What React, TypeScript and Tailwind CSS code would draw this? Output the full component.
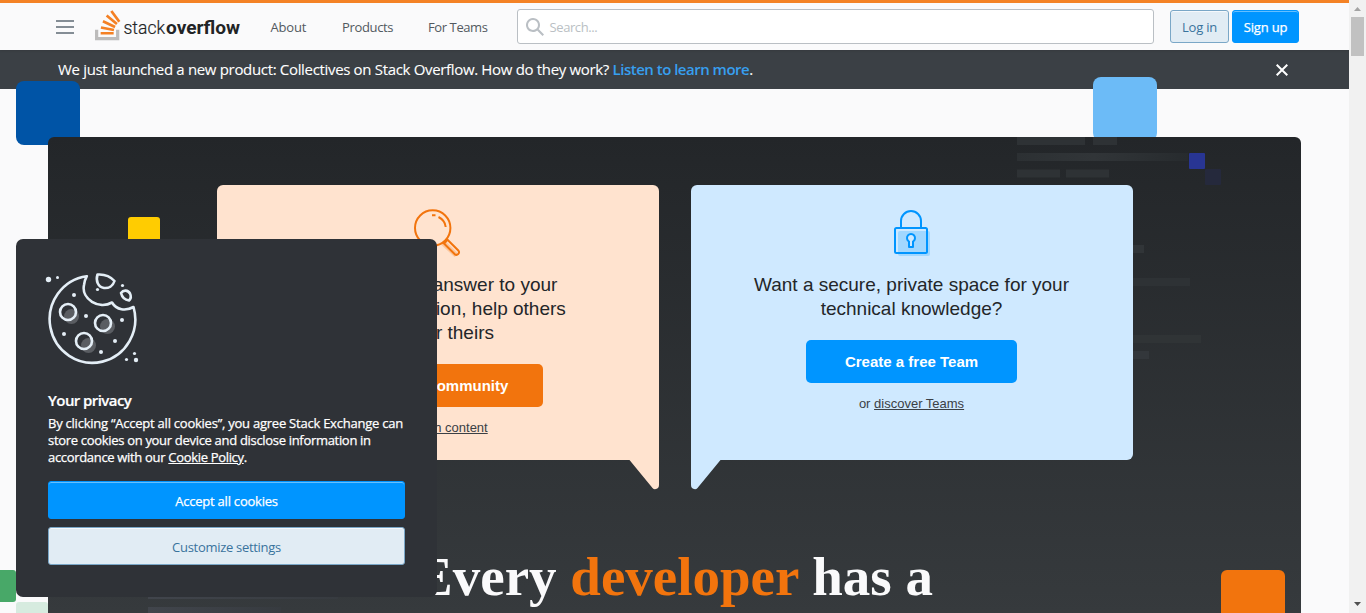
import React from "react";

const UI = "font-['Open_Sans','Noto_Sans',sans-serif]";
const ARIAL = "font-['Liberation_Sans',Arial,sans-serif]";

function Logo() {
  return (
    <svg width="150" height="34" viewBox="0 0 150 34" className="shrink-0" aria-label="Stack Overflow">
      <g transform="translate(0 0.2) scale(0.81)">
        <path d="M26 33v-9h4v13H0V24h4v9h22Z" fill="#bcbbbb" />
        <path
          d="m21.5 0-2.7 2 9.9 13.3 2.7-2L21.5 0ZM26 18.4 13.3 7.8l2.1-2.5 12.7 10.6-2.1 2.5ZM9.1 15.2l15 7 1.4-3-15-7-1.4 3Zm14 10.79.68-2.95-16.1-3.35L7 23l16.1 2.99ZM23 30H7v-3h16v3Z"
          fill="#f48024"
        />
      </g>
      <text x="28.500" y="24.400" fontSize="19" textLength="41.500" lengthAdjust="spacingAndGlyphs" fill="#222426" className="font-['Roboto'] font-light [stroke:#222426] [stroke-width:0.2px]">
        stack
      </text>
      <text x="71" y="24.400" fontSize="19" textLength="74" lengthAdjust="spacingAndGlyphs" fill="#222426" className="font-['Roboto'] font-bold">
        overflow
      </text>
    </svg>
  );
}

function Header() {
  return (
    <header className={`relative z-10 flex h-[50px] shrink-0 items-center border-t-[3px] border-[#f48225] bg-[#fafafb] text-[13px] text-[#525960] shadow-[0_1px_2px_rgba(0,0,0,0.1)] ${UI}`}>
      <button className="ml-14 flex w-[18px] flex-col gap-1" aria-label="Menu">
        <span className="h-0.5 bg-[#848d95]" />
        <span className="h-0.5 bg-[#848d95]" />
        <span className="h-0.5 bg-[#848d95]" />
      </button>
      <a className="ml-[21px]"><Logo /></a>
      <nav className="flex w-[272px] pt-0.5 pl-[25.500px]">
        <a className="w-[71.500px] tracking-[-0.2px]">About</a>
        <a className="w-[86px] tracking-[-0.35px]">Products</a>
        <a className="tracking-[-0.4px]">For Teams</a>
      </nav>
      <div className="flex h-[35px] w-[637px] items-center rounded-[3px] border border-[#babfc4] bg-white pl-2 text-[#babfc4]">
        <svg width="18" height="18" viewBox="0 0 18 18" fill="#babfc4">
          <path d="m18 16.5-5.14-5.18h-.35a7 7 0 1 0-1.19 1.19v.35L16.5 18l1.5-1.5ZM12 7A5 5 0 1 1 2 7a5 5 0 0 1 10 0Z" />
        </svg>
        <span className="pt-0.5 pl-[5.500px] tracking-[-0.4px]">Search...</span>
      </div>
      <button className="ml-4 h-[33px] w-[59px] rounded-[3px] border border-[#7aa7c7] bg-[#e1ecf4] pt-0.5 tracking-[-0.2px] text-[#39739d] shadow-[inset_0_1px_0_rgba(255,255,255,0.7)]">Log in</button>
      <button className="ml-[3px] h-[33px] w-[67px] rounded-[3px] border border-[#0095ff] bg-[#0095ff] pt-0.5 tracking-[-0.2px] text-white shadow-[inset_0_1px_0_rgba(255,255,255,0.4)] [-webkit-text-stroke:0.25px]">Sign up</button>
    </header>
  );
}

function Banner() {
  return (
    <div className={`flex h-[39px] shrink-0 items-center justify-between bg-[#3b4045] pr-[61px] pl-[58px] text-[15px] text-white ${UI}`}>
      <p className="tracking-[-0.33px] whitespace-nowrap [-webkit-text-stroke:0.1px]">
        We just launched a new product: Collectives on Stack Overflow. How do they work?{" "}
        <a className="font-semibold tracking-[-0.5px] text-[#379fef] [-webkit-text-stroke:0px]">Listen to learn more</a>.
      </p>
      <svg width="12" height="12" viewBox="0 0 12 12" stroke="#fff" strokeWidth="2">
        <path d="m.7.7 10.6 10.6M11.3.7.7 11.3" />
      </svg>
    </div>
  );
}

function SearchArt() {
  return (
    <svg width="48" height="48" viewBox="0.5 0 48 48" fill="none" stroke="#f2740d" strokeWidth="2">
      <path d="m28 36 4-4 13 13-4 3Z" fill="#f2740d" opacity=".25" stroke="none" />
      <circle cx="19.200" cy="19" r="17.700" />
      <path d="M18.500 6.200h3.500M25 8c4 2 6.700 5 7.200 10" />
      <path d="m30.500 34.500 10.800 10.800c2.500 1.700 5.300-1 3.700-3.600L34 30.800Z" />
    </svg>
  );
}

function LockArt() {
  return (
    <svg width="48" height="48" viewBox="1 -3 48 48" fill="none" stroke="#0095ff" strokeWidth="2">
      <rect x="11" y="19" width="32" height="25" rx="2" fill="#0095ff" opacity=".22" stroke="none" />
      <path d="M14 17V9.500a10 10 0 0 1 20 0V17" transform="translate(0 -.5)" />
      <rect x="8" y="16" width="32" height="25" rx="1.500" />
      <path d="M22 36v-5.500a4 4 0 1 1 4 0V36Z" fill="#cfe9ff" strokeLinejoin="round" transform="translate(0 -1)" />
    </svg>
  );
}

type CardProps = {
  art: React.ReactNode;
  lines: string[];
  action: string;
  link: string;
  cardClass: string;
  buttonClass: string;
  tail: React.ReactNode;
};

function Card({ art, lines, action, link, cardClass, buttonClass, tail }: CardProps) {
  return (
    <section className={`relative flex h-[275px] w-[442px] flex-col items-center rounded-t-md pt-6 ${ARIAL} ${cardClass}`}>
      {art}
      <h2 className="mt-4 text-center text-[19px] leading-6 text-[#232629]">
        {lines.map((l) => <span key={l} className="block">{l}</span>)}
      </h2>
      <button className={`mt-[19px] h-[43px] w-[211px] rounded-[5px] pt-0.5 text-[15px] font-bold text-white ${buttonClass}`}>{action}</button>
      <p className="mt-3 text-[13px] leading-[17px] text-[#3b4045]">
        or <a className="underline">{link}</a>
      </p>
      {tail}
    </section>
  );
}

function CodeBars() {
  return (
    <svg className="absolute inset-0" width="1253" height="476" viewBox="48 137 1253 476">
      <defs>
        <linearGradient id="bar" x1="0" x2="1">
          <stop offset="0" stopColor="#2c3033" />
          <stop offset=".45" stopColor="#313538" />
          <stop offset="1" stopColor="#272b2e" />
        </linearGradient>
        <linearGradient id="foot" x1="0" x2="1">
          <stop offset="0" stopColor="#41454c" />
          <stop offset="1" stopColor="#373b40" />
        </linearGradient>
      </defs>
      <g fill="#2e3235">
        <rect x="1017" y="137" width="68" height="8" />
        <rect x="1093" y="137" width="24" height="8" />
        <rect x="1017" y="153" width="171" height="8" fill="url(#bar)" />
        <rect x="1017" y="169.500" width="43" height="8" />
        <rect x="1066" y="169.500" width="43" height="8" />
      </g>
      <g fill="#313538">
        <rect x="1100" y="245" width="44" height="8" />
        <rect x="1100" y="278" width="90" height="8" fill="#2e3235" />
        <rect x="1100" y="335" width="101" height="8" fill="#303436" />
        <rect x="1100" y="351" width="49" height="8" fill="#33373b" />
      </g>
      <rect x="1189" y="153" width="16" height="16" rx="1" fill="#283593" />
      <rect x="1205" y="169" width="16" height="16" rx="1" fill="#25293c" />
      <rect x="148" y="591" width="190" height="8" fill="url(#foot)" />
      <rect x="148" y="607" width="133" height="8" fill="url(#foot)" />
    </svg>
  );
}

function Hero() {
  return (
    <div className="relative mx-12 mt-12 h-[600px] rounded-t-md bg-[linear-gradient(#232629,#363a3d_476px)]">
      <CodeBars />
      <div className="absolute top-20 left-20 size-8 rounded-[3px] bg-[#ffcc01]" />
      <div className="relative flex justify-center gap-8 pt-12">
        <Card
          art={<SearchArt />}
          lines={["Find the best answer to your", "technical question, help others", "answer theirs"]}
          action="Join the community"
          link="search content"
          cardClass="rounded-bl-md bg-[#ffe3cf]"
          buttonClass="bg-[#f2740d]"
          tail={
            <svg className="absolute top-full right-0" width="31" height="30" viewBox="0 0 31 30" fill="#ffe3cf">
              <path d="M0-1h31v26q0 4-4 4.200-1.500 0-2.500-1.200L1.500 0Z" />
            </svg>
          }
        />
        <Card
          art={<LockArt />}
          lines={["Want a secure, private space for your", "technical knowledge?"]}
          action="Create a free Team"
          link="discover Teams"
          cardClass="rounded-br-md bg-[#cfe9ff]"
          buttonClass="bg-[#0095ff]"
          tail={
            <svg className="absolute top-full left-0" width="31" height="30" viewBox="0 0 31 30" fill="#cfe9ff">
              <path d="M31-1H0v26q0 4 4 4.200 1.500 0 2.500-1.200L29.500 0Z" />
            </svg>
          }
        />
      </div>
      <h1 className="relative mt-[85px] text-center font-['Liberation_Serif','Times_New_Roman',serif] text-[55px] leading-[64px] font-bold text-[#fafafb]">
        Every <span className="text-[#f2740d]">developer</span> has a
      </h1>
      <div className="absolute top-[433px] right-4 size-16 rounded-md bg-[#f2740d]" />
    </div>
  );
}

function Cookie() {
  return (
    <svg width="96" height="96" viewBox="0 0 96 96" fill="none" stroke="#e4eef6" strokeWidth="2.600" strokeLinejoin="round">
      <g fill="#5a5d62" stroke="none">
        <circle cx="27.500" cy="45.500" r="7.500" />
        <circle cx="63.500" cy="55.500" r="7.500" />
        <circle cx="44.500" cy="74.500" r="7.500" />
      </g>
      <path d="M42.800 5.200A42.800 43.500 0 1 0 89.500 36c-8 4.500-17 3-21.500-4.500C55 39 37 28 40 14q.7-5 2.800-8.800Z" />
      <path d="M53.500 3.500c7-.5 13 2 17 6.500-1.500 5-6 7.500-10.500 7-6-1-8.500-7-6.500-13.500Z" />
      <path d="M77 22c2.500-3.500 7-3 9 .5 1.500 3 1 5-1 7-4-.5-7-3.500-8-7.500Z" />
      <circle cx="24" cy="41" r="8" />
      <circle cx="59" cy="52" r="8" />
      <circle cx="40" cy="70" r="8" />
      <g fill="#e4eef6" stroke="none">
        <circle cx="4.500" cy="8.500" r="2.700" />
        <circle cx="13.500" cy="6.500" r="1.500" />
        <circle cx="30" cy="24" r="2" />
        <circle cx="53.500" cy="18.500" r="1.600" />
        <circle cx="78.500" cy="14.500" r="1.600" />
        <circle cx="42" cy="45" r="2" />
        <circle cx="78" cy="49" r="2" />
        <circle cx="20" cy="63" r="2" />
        <circle cx="71" cy="70" r="2" />
        <circle cx="57" cy="81" r="2" />
        <circle cx="90.500" cy="82.500" r="1.600" />
        <circle cx="82.500" cy="88.500" r="1.600" />
        <circle cx="92" cy="89" r="2.200" />
      </g>
    </svg>
  );
}

function CookieDialog() {
  return (
    <aside className={`absolute top-[239px] left-4 z-20 flex h-[358px] w-[421px] flex-col rounded-[7px] bg-[#2f3237] px-8 text-[13px] text-white ${UI}`}>
      <div className="mt-8 -ml-1"><Cookie /></div>
      <h3 className="mt-[23px] text-[15px] leading-5 font-semibold tracking-[-0.57px] [-webkit-text-stroke:0.2px]">Your privacy</h3>
      <p className="mt-[5px] leading-[17px] tracking-[-0.235px] whitespace-nowrap [-webkit-text-stroke:0.25px]">
        By clicking “Accept all cookies”, you agree Stack Exchange can
        <br />
        <span className="tracking-[-0.31px]">store cookies on your device and disclose information in</span>
        <br />
        <span className="tracking-[-0.32px]">accordance with our <a className="underline">Cookie Policy</a>.</span>
      </p>
      <button className="mt-[15px] h-[38px] shrink-0 rounded-[3px] border border-[#0095ff] bg-[#0095ff] pt-[3px] tracking-[-0.22px] shadow-[inset_0_1px_0_rgba(255,255,255,0.4)] [-webkit-text-stroke:0.25px]">Accept all cookies</button>
      <button className="mt-2 h-[38px] shrink-0 rounded-[3px] border border-[#7aa7c7] bg-[#e1ecf4] pt-[3px] tracking-[-0.3px] text-[#39739d] shadow-[inset_0_1px_0_rgba(255,255,255,0.7)]">Customize settings</button>
    </aside>
  );
}

function Scrollbar() {
  return (
    <div className="flex w-[17px] shrink-0 flex-col items-center bg-[#f1f1f1]">
      <svg width="17" height="17" viewBox="0 0 17 17" fill="#a3a3a3"><path d="M5 11h7L8.500 7Z" /></svg>
      <div className="h-[39px] w-[13px] bg-[#c1c1c1]" />
      <svg className="mt-auto" width="17" height="17" viewBox="0 0 17 17" fill="#505050"><path d="M5 6h7l-3.500 4Z" /></svg>
    </div>
  );
}

export default function App() {
  return (
    <div className="relative flex h-[613px] w-[1366px] overflow-hidden bg-[#fafafb]">
      <div className="relative flex h-full w-[1349px] flex-col overflow-hidden">
        <Header />
        <Banner />
        <main className="relative flex-1">
          <div className="absolute top-[-8px] left-4 size-16 rounded-lg bg-[#0054a6]" />
          <div className="absolute top-[-12px] left-[1093px] size-16 rounded-lg bg-[#6cbbf7]" />
          <div className="absolute top-[481px] -left-4 size-8 rounded-[3px] bg-[#48a868]" />
          <div className="absolute top-[513px] left-4 size-8 rounded-[3px] bg-[#d6ebdf]" />
          <div className="flow-root"><Hero /></div>
        </main>
        <CookieDialog />
      </div>
      <Scrollbar />
    </div>
  );
}
